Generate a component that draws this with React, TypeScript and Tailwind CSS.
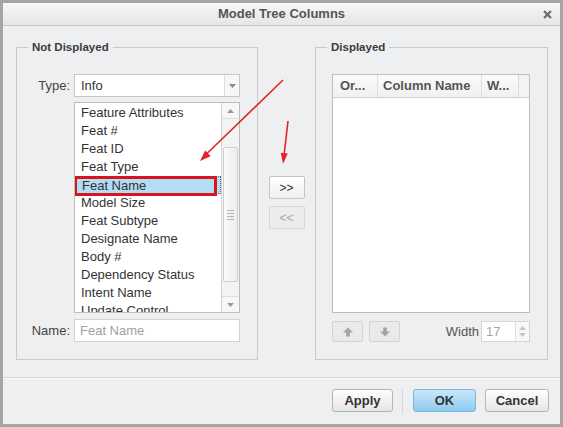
import React from "react";

const items = [
  "Feature Attributes",
  "Feat #",
  "Feat ID",
  "Feat Type",
  "Feat Name",
  "Model Size",
  "Feat Subtype",
  "Designate Name",
  "Body #",
  "Dependency Status",
  "Intent Name",
  "Update Control",
];

function Tri({ dir, color = "#9a9a9a" }: { dir: "up" | "down"; color?: string }) {
  return (
    <svg width="7" height="4" viewBox="0 0 7 4">
      {dir === "up" ? (
        <polygon points="0,4 3.5,0 7,4" fill={color} />
      ) : (
        <polygon points="0,0 3.5,4 7,0" fill={color} />
      )}
    </svg>
  );
}

function MoveIcon({ dir }: { dir: "up" | "down" }) {
  return (
    <svg width="10" height="10" viewBox="0 0 10 10">
      {dir === "up" ? (
        <g fill="#a3a3a3">
          <polygon points="0,5.5 5,0.5 10,5.5" />
          <rect x="3.2" y="5" width="3.6" height="4.5" />
        </g>
      ) : (
        <g fill="#a3a3a3">
          <polygon points="0,4.5 5,9.5 10,4.5" />
          <rect x="3.2" y="0.5" width="3.6" height="4.5" />
        </g>
      )}
    </svg>
  );
}

function GroupBox({
  title,
  className,
  children,
}: {
  title: string;
  className: string;
  children: React.ReactNode;
}) {
  return (
    <div className={`relative border border-[#c9cacb] ${className}`}>
      <span className="absolute left-[11px] top-[-8px] bg-[#eeeff0] px-[4px] text-[11.5px] font-bold leading-[14px] text-[#3c3c3c]">
        {title}
      </span>
      {children}
    </div>
  );
}

function DialogButton({
  label,
  primary,
  className,
}: {
  label: string;
  primary?: boolean;
  className: string;
}) {
  return (
    <button
      className={`h-[23px] rounded-[3px] border text-[13px] font-bold leading-none text-[#333] ${
        primary
          ? "border-[#7fb6dd] bg-gradient-to-b from-[#c9e6f8] to-[#8fcbf1]"
          : "border-[#b5b5b5] bg-gradient-to-b from-[#fdfdfd] to-[#e6e6e6]"
      } ${className}`}
    >
      {label}
    </button>
  );
}

export default function App() {
  return (
    <div className="relative h-[427px] w-[563px] font-['Liberation_Sans',Arial,sans-serif]">
      <div className="flex h-full w-full flex-col border-[3px] border-[#a5a5a5] bg-[#eeeff0]">
        {/* title bar */}
        <div className="relative flex h-[23px] shrink-0 items-center justify-center border-b border-[#c4c4c4] bg-gradient-to-b from-[#f7f7f7] to-[#e6e6e6]">
          <span className="text-[13px] font-bold text-[#555]">Model Tree Columns</span>
          <svg
            className="absolute right-[8px] top-[7px]"
            width="9"
            height="9"
            viewBox="0 0 9 9"
          >
            <path d="M1 1 L8 8 M8 1 L1 8" stroke="#6a6a6a" strokeWidth="2.2" />
          </svg>
        </div>

        {/* body */}
        <div className="flex h-[351px] shrink-0 pl-[13px] pt-[21px]">
          <GroupBox title="Not Displayed" className="h-[313px] w-[242px] shrink-0">
            <div className="flex flex-col pt-[26px]">
              <div className="flex h-[23px] items-center gap-[4px]">
                <span className="w-[53px] text-right text-[13px] text-[#444]">Type:</span>
                <div className="flex h-[23px] w-[166px] items-stretch border border-[#c6c6c6] bg-white">
                  <span className="flex flex-1 items-center pl-[6px] text-[13px] text-[#333]">
                    Info
                  </span>
                  <span className="flex w-[15px] items-center justify-center border-l border-[#dcdcdc] bg-[#f7f7f7]">
                    <Tri dir="down" color="#8a8a8a" />
                  </span>
                </div>
              </div>

              <div className="mt-[5px] flex gap-[4px]">
                <span className="w-[53px]" />
                <div className="flex h-[211px] w-[166px] border border-[#bdbdbd] bg-white">
                  <div className="flex-1 overflow-hidden pt-[1px]">
                    {items.map((it) => (
                      <div
                        key={it}
                        className={`relative h-[18px] whitespace-nowrap pl-[6px] text-[13px] leading-[18px] text-[#333] ${
                          it === "Feat Name"
                            ? "border border-dotted border-[#666] bg-[#b3dcf5] pl-[5px] leading-[16px]"
                            : ""
                        }`}
                      >
                        {it}
                        {it === "Feat Name" && (
                          <span className="absolute left-[-2px] top-[-1px] h-[20px] w-[143px] border-[3px] border-[#d8141c]" />
                        )}
                      </div>
                    ))}
                  </div>
                  {/* vertical scrollbar */}
                  <div className="flex w-[18px] flex-col border-l border-[#d4d4d4] bg-[#f3f3f3]">
                    <div className="flex h-[16px] items-center justify-center border-b border-[#dedede] bg-[#f7f7f7]">
                      <Tri dir="up" />
                    </div>
                    <div className="flex-1 px-[1px] pt-[28px]">
                      <div className="flex h-[135px] items-center justify-center rounded-[2px] border border-[#cfcfcf] bg-gradient-to-r from-[#fbfbfb] to-[#ececec]">
                        <div className="flex flex-col gap-[2px]">
                          <span className="h-px w-[7px] bg-[#b5b5b5]" />
                          <span className="h-px w-[7px] bg-[#b5b5b5]" />
                          <span className="h-px w-[7px] bg-[#b5b5b5]" />
                          <span className="h-px w-[7px] bg-[#b5b5b5]" />
                        </div>
                      </div>
                    </div>
                    <div className="flex h-[16px] items-center justify-center border-t border-[#dedede] bg-[#f7f7f7]">
                      <Tri dir="down" />
                    </div>
                  </div>
                </div>
              </div>

              <div className="mt-[6px] flex h-[23px] items-center gap-[4px]">
                <span className="w-[53px] text-right text-[13px] text-[#444]">Name:</span>
                <div className="flex h-[23px] w-[166px] items-center border border-[#d2d2d2] bg-white pl-[5px] text-[13px] text-[#a0a0a0]">
                  Feat Name
                </div>
              </div>
            </div>
          </GroupBox>

          {/* transfer buttons */}
          <div className="flex w-[57px] shrink-0 flex-col items-center gap-[7px] pt-[129px]">
            <button className="flex h-[23px] w-[36px] items-center justify-center rounded-[2px] border border-[#c4c4c4] bg-gradient-to-b from-[#ffffff] to-[#efefef] text-[12px] text-[#333]">
              &gt;&gt;
            </button>
            <button className="flex h-[23px] w-[36px] items-center justify-center rounded-[2px] border border-[#d6d6d6] bg-[#ececec] text-[12px] text-[#a8a8a8]">
              &lt;&lt;
            </button>
          </div>

          <GroupBox title="Displayed" className="h-[313px] w-[233px] shrink-0">
            <div className="flex flex-col pl-[16px] pt-[26px]">
              <div className="flex h-[239px] w-[198px] flex-col border border-[#bdbdbd] bg-white">
                <div className="flex h-[23px] border-b border-[#cfcfcf] bg-gradient-to-b from-[#fbfbfb] to-[#f0f0f0] text-[13px] font-bold text-[#555]">
                  <span className="flex w-[45px] items-center border-r border-[#dcdcdc] pl-[7px]">Or...</span>
                  <span className="flex w-[104px] items-center border-r border-[#dcdcdc] pl-[5px]">Column Name</span>
                  <span className="flex w-[37px] items-center border-r border-[#dcdcdc] pl-[5px]">W...</span>
                  <span className="flex-1 bg-[#f3f3f3]" />
                </div>
                <div className="flex-1" />
              </div>

              <div className="mt-[8px] flex h-[21px] w-[198px] items-center">
                <button className="flex h-[21px] w-[31px] items-center justify-center rounded-[2px] border border-[#d3d3d3] bg-[#e9eaeb]">
                  <MoveIcon dir="up" />
                </button>
                <button className="ml-[6px] flex h-[21px] w-[31px] items-center justify-center rounded-[2px] border border-[#d3d3d3] bg-[#e9eaeb]">
                  <MoveIcon dir="down" />
                </button>
                <span className="ml-auto mr-[2px] text-[13px] text-[#555]">Width</span>
                <div className="flex h-[21px] w-[49px] items-stretch border border-[#d6d6d6] bg-white">
                  <span className="flex flex-1 items-center pl-[4px] text-[13px] text-[#a5a5a5]">17</span>
                  <span className="flex w-[14px] flex-col items-center justify-center gap-[3px] border-l border-[#e0e0e0] bg-[#f8f8f8]">
                    <Tri dir="up" color="#c4c4c4" />
                    <Tri dir="down" color="#c4c4c4" />
                  </span>
                </div>
              </div>
            </div>
          </GroupBox>
        </div>

        {/* footer */}
        <div className="flex flex-1 items-start justify-end border-t border-[#d6d7d8] pr-[11px] pt-[11px] shadow-[inset_0_1px_0_#fafafa]">
          <DialogButton label="Apply" className="w-[61px]" />
          <span className="mx-[9px] h-[25px] w-px bg-[#d8d8d8]" />
          <DialogButton label="OK" primary className="ml-[1px] w-[63px]" />
          <DialogButton label="Cancel" className="ml-[9px] w-[64px]" />
        </div>
      </div>

      {/* red annotation arrows */}
      <svg
        className="pointer-events-none absolute left-0 top-0"
        width="563"
        height="427"
        viewBox="0 0 563 427"
      >
        <line x1="283" y1="80" x2="207" y2="153.5" stroke="#e0242a" strokeWidth="1.6" />
        <polygon points="200,161 210.7,156.3 205.2,150.5" fill="#e0242a" />
        <line x1="288" y1="121" x2="284.3" y2="153" stroke="#e0242a" strokeWidth="1.6" />
        <polygon points="283,164 287.8,153.5 280.8,152.7" fill="#e0242a" />
      </svg>
    </div>
  );
}
